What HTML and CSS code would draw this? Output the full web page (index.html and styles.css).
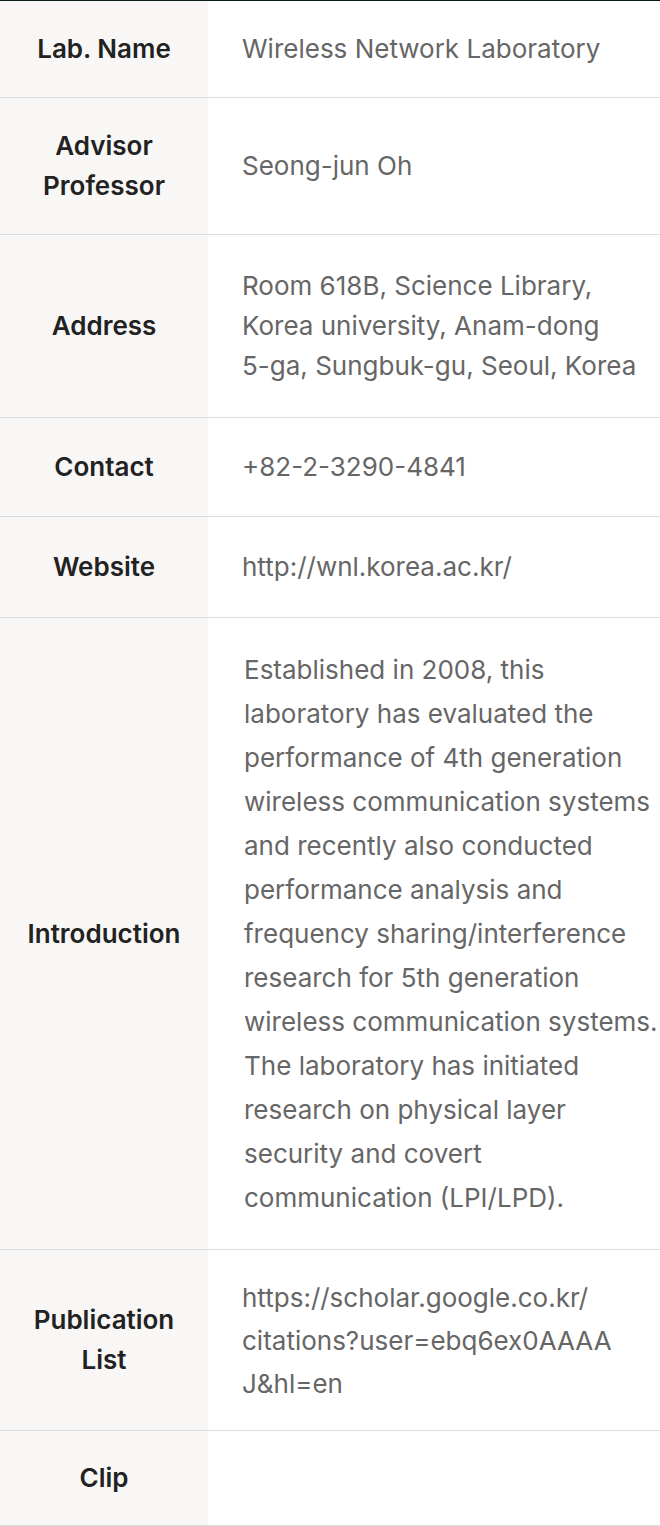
FILE: index.html
```html
<!DOCTYPE html>
<html lang="en">
<head>
<meta charset="utf-8">
<title>Wireless Network Laboratory</title>
<link rel="stylesheet" href="styles.css">
</head>
<body>
<div class="info">
  <div class="row row-name">
    <div class="label">Lab. Name</div>
    <div class="value">Wireless Network Laboratory</div>
  </div>
  <div class="row row-advisor">
    <div class="label">Advisor<br>Professor</div>
    <div class="value">Seong-jun Oh</div>
  </div>
  <div class="row row-address">
    <div class="label">Address</div>
    <div class="value"><p class="text">Room 618B, Science Library, Korea university, Anam-dong <span class="nowrap">5-ga,</span> Sungbuk-gu, Seoul, Korea</p></div>
  </div>
  <div class="row row-contact">
    <div class="label">Contact</div>
    <div class="value">+82-2-3290-4841</div>
  </div>
  <div class="row row-web">
    <div class="label">Website</div>
    <div class="value">http://wnl.korea.ac.kr/</div>
  </div>
  <div class="row row-intro">
    <div class="label">Introduction</div>
    <div class="value intro"><p class="text">Established in 2008, this laboratory has evaluated the performance of 4th generation wireless communication systems and recently also conducted performance analysis and frequency sharing/interference research for 5th generation wireless communication systems. The laboratory has initiated research on physical layer security and covert communication (LPI/LPD).</p></div>
  </div>
  <div class="row row-pub">
    <div class="label">Publication<br>List</div>
    <div class="value pub"><p class="text">https://scholar.google.co.kr/<br><span class="breakall">citations?user=ebq6ex0AAAAJ&amp;hl=en</span></p></div>
  </div>
  <div class="row row-clip">
    <div class="label">Clip</div>
    <div class="value"></div>
  </div>
</div>
</body>
</html>
```

FILE: styles.css
```css
html, body {
  margin: 0;
  padding: 0;
  background: #ffffff;
}
body {
  font-family: "Inter", "Noto Sans", sans-serif;
  width: 660px;
  overflow: hidden;
}
.info {
  border-top: 1px solid #0b1a1a;
  display: flex;
  flex-direction: column;
}
.row {
  display: grid;
  grid-template-columns: 208px 1fr;
  border-bottom: 1px solid #dcdcdc;
}
.label {
  background: #f8f7f5;
  color: #222222;
  font-weight: 600;
  font-size: 26px;
  line-height: 40px;
  text-align: center;
  display: flex;
  align-items: center;
  justify-content: center;
}
.value {
  color: #666666;
  font-size: 26px;
  line-height: 40px;
  padding: 0 6px 0 34px;
  display: flex;
  align-items: center;
  min-width: 0;
}
.text {
  margin: 0;
  min-width: 0;
}
.nowrap {
  white-space: nowrap;
}
.breakall {
  word-break: break-all;
}
.row-name { height: 96px; }
.row-advisor { height: 136px; }
.row-address { height: 182px; }
.row-contact { height: 98px; }
.row-web { height: 100px; }
.row-intro { height: 631px; }
.intro {
  line-height: 44px;
  padding-left: 36px;
  padding-right: 0;
}
.row-pub { height: 180px; }
.pub {
  line-height: 43px;
  padding-right: 34px;
}
.row-clip { height: 94px; }
```
